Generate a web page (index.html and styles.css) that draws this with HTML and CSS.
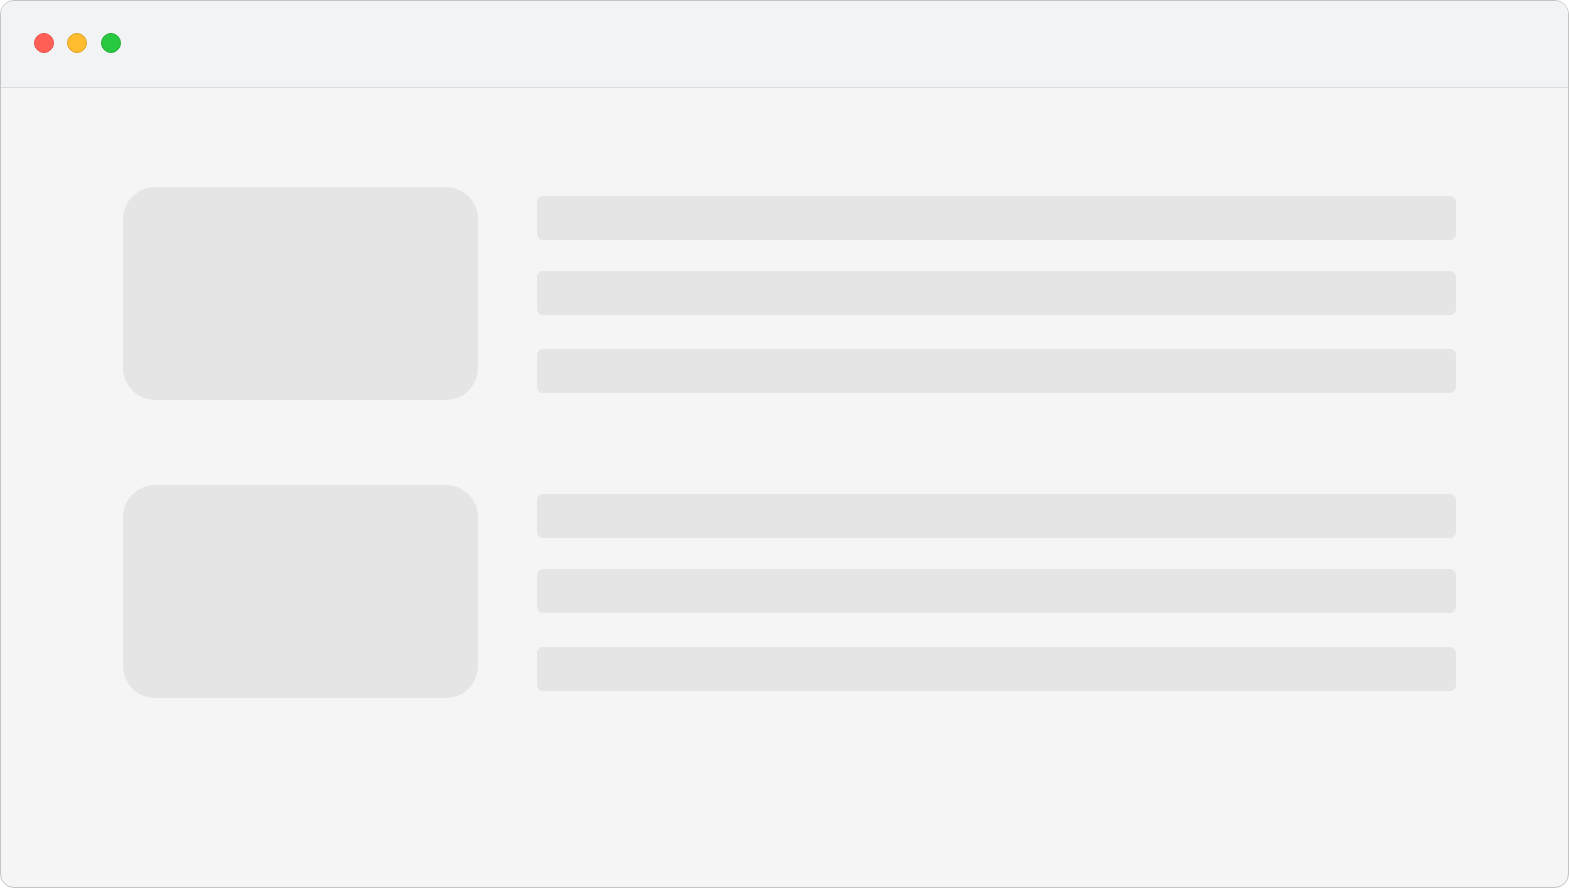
FILE: index.html
```html
<!DOCTYPE html>
<html>
<head>
<meta charset="utf-8">
<link rel="stylesheet" href="styles.css">
</head>
<body>
<div class="window">
  <div class="titlebar">
    <span class="dot red"></span>
    <span class="dot yellow"></span>
    <span class="dot green"></span>
  </div>
  <div class="content">
    <div class="row">
      <div class="thumb"></div>
      <div class="lines">
        <div class="bar b1"></div>
        <div class="bar b2"></div>
        <div class="bar b3"></div>
      </div>
    </div>
    <div class="row">
      <div class="thumb"></div>
      <div class="lines">
        <div class="bar b1"></div>
        <div class="bar b2"></div>
        <div class="bar b3"></div>
      </div>
    </div>
  </div>
</div>
</body>
</html>
```

FILE: styles.css
```css
html, body {
  margin: 0;
  padding: 0;
  background: #ffffff;
  font-family: "Liberation Sans", Arial, sans-serif;
}
.window {
  box-sizing: border-box;
  width: 1569px;
  height: 888px;
  border: 1px solid #c4c4c4;
  border-radius: 14px;
  overflow: hidden;
  background: #f5f5f5;
  display: flex;
  flex-direction: column;
}
.titlebar {
  box-sizing: border-box;
  height: 87px;
  flex: none;
  background: #f2f3f5;
  border-bottom: 1px solid #dcdcdc;
  display: flex;
  align-items: flex-start;
  padding: 32px 0 0 32.5px;
  gap: 13.5px;
}
.dot {
  width: 20px;
  height: 20px;
  border-radius: 50%;
  box-sizing: border-box;
}
.red { background: #ff5f57; border: 1px solid #e5524b; }
.yellow { background: #febc2e; border: 1px solid #e0a224; }
.green { background: #28c840; border: 1px solid #20ad35; }
.content {
  flex: 1;
  padding: 99px 0 0 122px;
  display: flex;
  flex-direction: column;
  gap: 85px;
}
.row {
  display: flex;
  align-items: flex-start;
}
.thumb {
  width: 355px;
  height: 213px;
  border-radius: 32px;
  background: #e5e5e5;
  flex: none;
}
.lines {
  margin-left: 59px;
  padding-top: 9px;
  display: flex;
  flex-direction: column;
}
.bar {
  width: 919px;
  height: 44px;
  border-radius: 6px;
  background: #e5e5e5;
}
.b2 { margin-top: 31px; }
.b3 { margin-top: 34px; }
```
